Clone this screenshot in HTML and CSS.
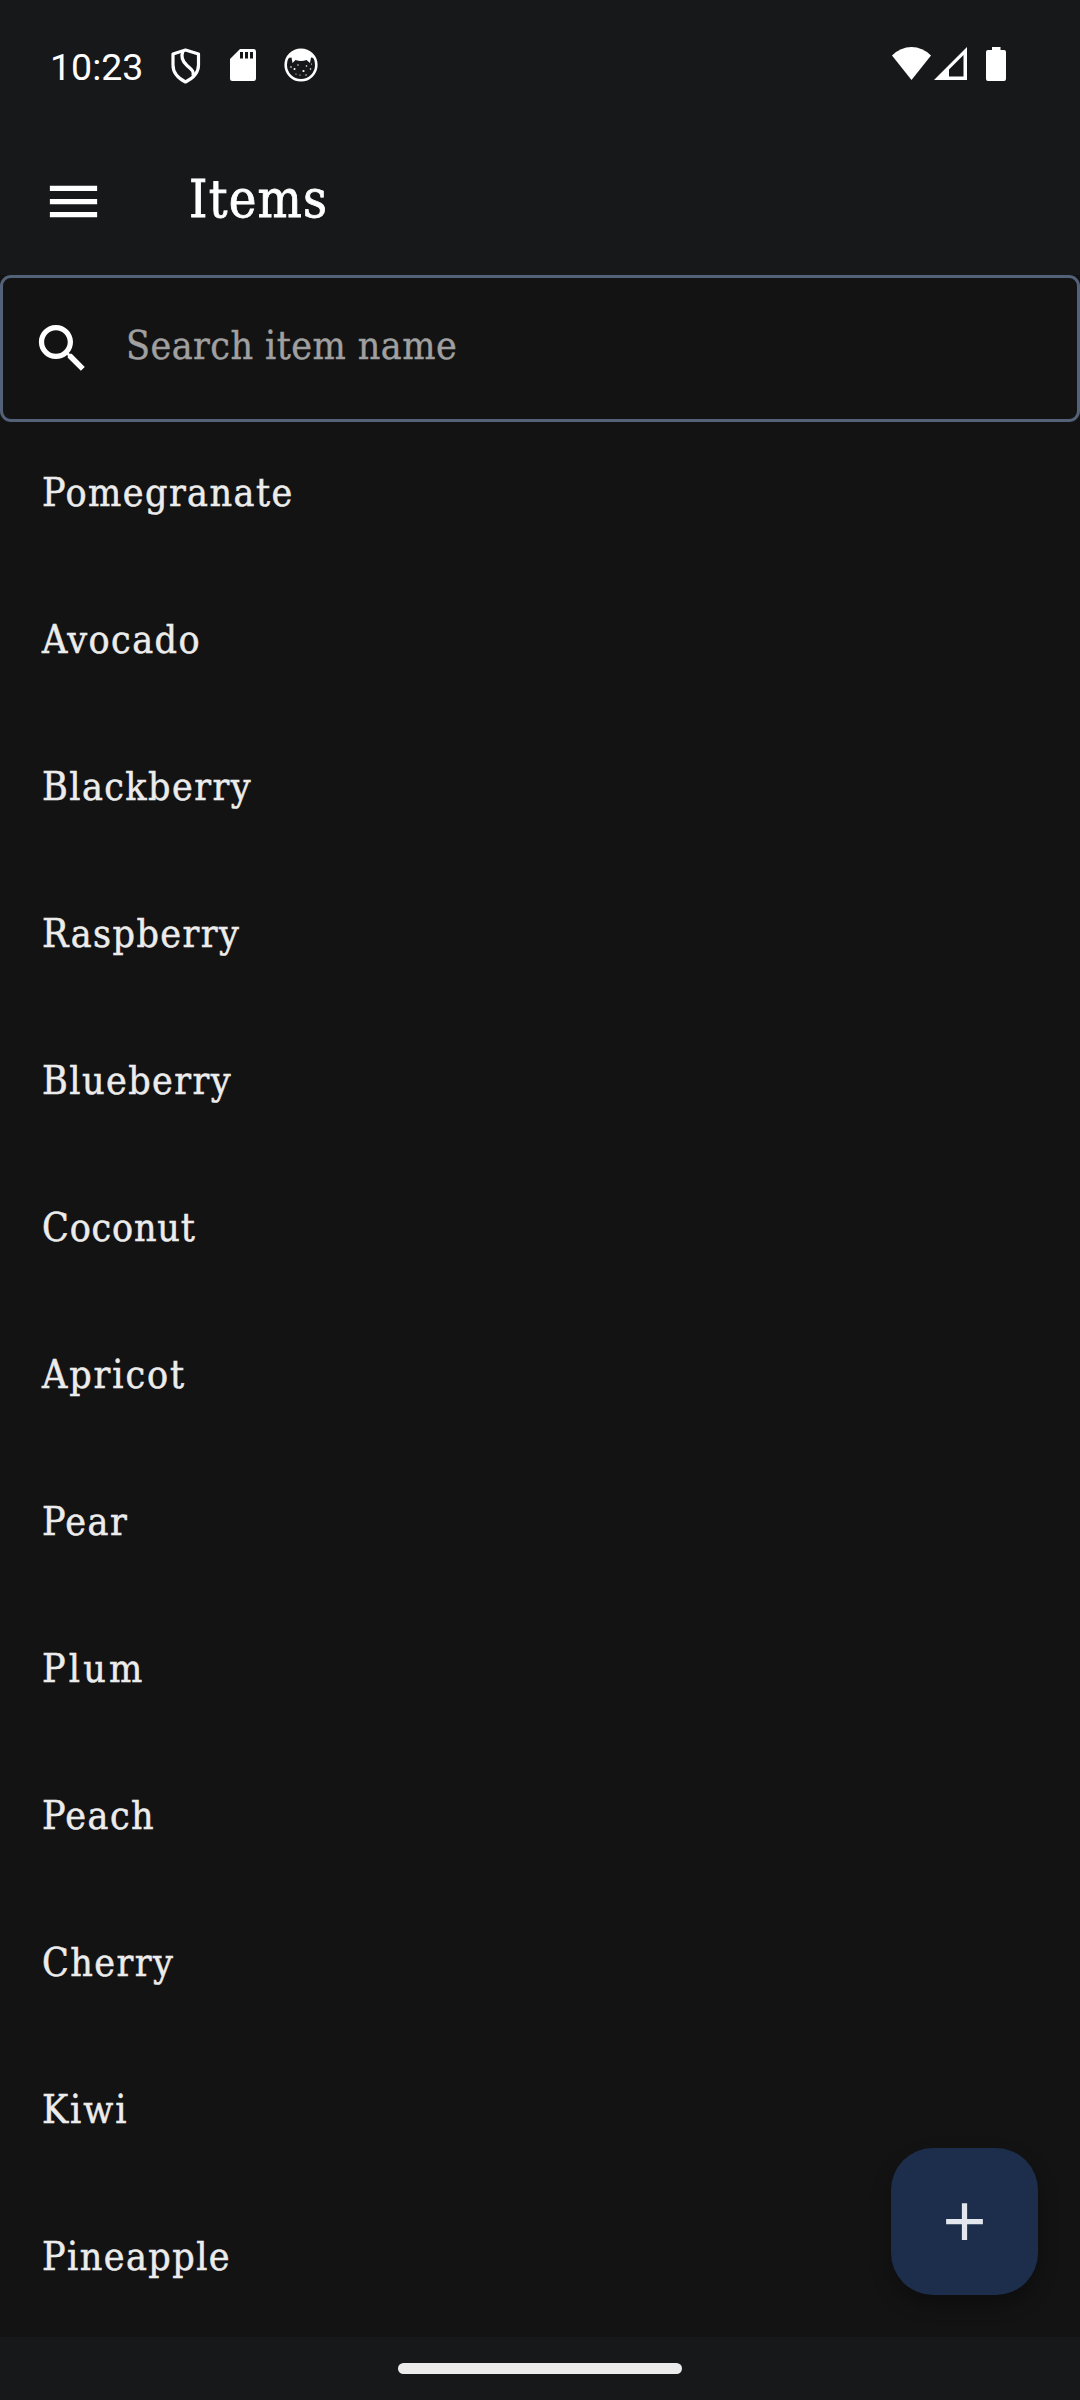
FILE: index.html
```html
<!DOCTYPE html>
<html lang="en">
<head>
<meta charset="utf-8">
<title>Items</title>
<link rel="stylesheet" href="styles.css">
</head>
<body>
<div class="status">
  <span class="clock">10:23</span>
  <svg class="shield" viewBox="0 0 30 36" width="30" height="36" fill="none" stroke="#fff" stroke-width="3.200" stroke-linejoin="round"><path d="M14.500 2 27.500 6V17C27.500 24.500 21.500 30.500 14.500 34 7.500 30.500 2 24.500 2 17V6Z"/><path d="M12 3C9.500 9 11 13 16 17.500S23 23 22 27.500"/></svg>
  <svg class="sd" viewBox="0 0 26 32" width="26" height="32"><path fill="#fff" d="M10 0H23.500Q26 0 26 2.500V29.500Q26 32 23.500 32H2.500Q0 32 0 29.500V10Z"/><path fill="#17181a" d="M10 3h3v6.500h-3zM15 3h3v6.500h-3zM20 3h3v6.500h-3z"/></svg>
  <svg class="cat" viewBox="0 0 34 34" width="34" height="34"><circle cx="17" cy="17" r="15.300" fill="none" stroke="#fff" stroke-width="2.600"/><path fill="#fff" d="M4 10Q8 2 17 1.500 26 2 30 10L27 9.500 26 15 22.500 12Q17 14 11.500 12L8.500 15 7.500 9.500Z"/><g fill="#fff"><circle cx="7" cy="19" r=".8"/><circle cx="10.500" cy="21" r="1"/><circle cx="14" cy="17" r=".7"/><circle cx="19.500" cy="23" r="1.100"/><circle cx="22.500" cy="18" r=".8"/><circle cx="26.500" cy="21" r=".8"/><circle cx="12" cy="26" r=".6"/><circle cx="16" cy="27" r=".6"/><circle cx="22" cy="27" r=".7"/><circle cx="27.500" cy="16" r=".6"/></g></svg>
  <svg class="wifi" viewBox="0 0 39 33" width="39" height="33" fill="#fff"><path d="M0 8.500Q8.500 0 19.500 0T39 8.500L19.500 33Z"/></svg>
  <svg class="signal" viewBox="0 0 33 33" width="33" height="33"><path fill="#fff" fill-rule="evenodd" d="M0 33 33 0V33ZM15 22.500V29.500H29.500V8Z"/></svg>
  <svg class="battery" viewBox="0 0 20 34" width="20" height="34" fill="#fff"><path d="M6 0h8.500v3H18q2 0 2 2v27q0 2-2 2H2q-2 0-2-2V5q0-2 2-2h4z"/></svg>
</div>
<header class="bar">
  <svg viewBox="0 0 24 24" width="63" height="63" fill="#fff"><path d="M3 18h18v-2H3v2zm0-5h18v-2H3v2zm0-7v2h18V6H3z"/></svg>
  <h1>Items</h1>
</header>
<div class="search">
  <svg viewBox="0 0 24 24" width="63" height="63" fill="#fff"><path d="M15.500 14h-.79l-.28-.27C15.410 12.590 16 11.110 16 9.500 16 5.910 13.090 3 9.500 3S3 5.910 3 9.500 5.910 16 9.500 16c1.610 0 3.090-.59 4.230-1.570l.27.28v.79l5 4.990L20.490 19l-4.990-5zm-6 0C7.010 14 5 11.990 5 9.500S7.010 5 9.500 5 14 7.010 14 9.500 11.990 14 9.500 14z"/></svg>
  <span>Search item name</span>
</div>
<ul class="list">
  <li>Pomegranate</li>
  <li>Avocado</li>
  <li>Blackberry</li>
  <li>Raspberry</li>
  <li>Blueberry</li>
  <li class="tight">Coconut</li>
  <li class="loose">Apricot</li>
  <li>Pear</li>
  <li class="wide">Plum</li>
  <li>Peach</li>
  <li>Cherry</li>
  <li class="loose">Kiwi</li>
  <li>Pineapple</li>
</ul>
<nav class="gesture"><div class="pill"></div></nav>
<button class="fab" aria-label="Add item"><svg viewBox="0 0 24 24" width="63" height="63" fill="#e3e6ec"><path d="M19 13h-6v6h-2v-6H5v-2h6V5h2v6h6v2z"/></svg></button>
</body>
</html>
```
FILE: styles.css
```css
* { box-sizing: border-box; }
body {
  margin: 0;
  width: 1080px;
  height: 2400px;
  display: flex;
  flex-direction: column;
  position: relative;
  overflow: hidden;
  background: #131313;
  color: #ececec;
  font-family: "DejaVu Serif Condensed", "DejaVu Serif", serif;
  font-stretch: condensed;
}
svg { display: block; flex: none; }
.status {
  height: 128px;
  display: flex;
  align-items: flex-start;
  padding: 47px 74px 0 50px;
  background: #17181a;
  color: #fff;
}
.clock { font: 37.500px/40px Roboto, sans-serif; width: 121px; }
.shield { margin-top: 1px; }
.sd { margin: 2px 0 0 29px; }
.cat { margin: 1px 0 0 28px; }
.wifi { margin-left: auto; }
.signal { margin-left: 3px; }
.battery { margin-left: 19px; }
.bar {
  height: 147px;
  display: flex;
  align-items: center;
  padding-left: 42px;
  background: #17181a;
}
.bar h1 {
  margin: 0 0 6px 84px;
  color: #fff;
  font-size: 52px;
  font-weight: 400;
  letter-spacing: 1.2px;
  -webkit-text-stroke: .8px currentColor;
}
.search {
  height: 147px;
  display: flex;
  align-items: center;
  padding-left: 28px;
  border: 3px solid #536179;
  border-radius: 11px;
  font-size: 39px;
  letter-spacing: .45px;
  color: #a0a0a0;
  -webkit-text-stroke: .4px currentColor;
}
.search span { margin: 0 0 7px 32px; }
.list { flex: 1; margin: 0; padding: 0; list-style: none; }
.list li {
  height: 147px;
  display: flex;
  align-items: center;
  padding: 0 0 6px 42px;
  font-size: 39px;
  letter-spacing: 1.45px;
  -webkit-text-stroke: .5px currentColor;
}
.list .tight { letter-spacing: .8px; }
.list .loose { letter-spacing: 1.9px; }
.list .wide { letter-spacing: 3.2px; }
.gesture {
  height: 63px;
  display: flex;
  justify-content: center;
  padding-top: 26px;
  background: #17181a;
}
.pill { width: 284px; height: 11px; border-radius: 6px; background: #ececec; }
.fab {
  position: absolute;
  left: 891px;
  top: 2148px;
  width: 147px;
  height: 147px;
  padding: 0;
  display: flex;
  align-items: center;
  justify-content: center;
  border: 0;
  border-radius: 42px;
  background: #1c2e4b;
  box-shadow: 0 10px 20px rgba(0, 0, 0, .3);
}
```
